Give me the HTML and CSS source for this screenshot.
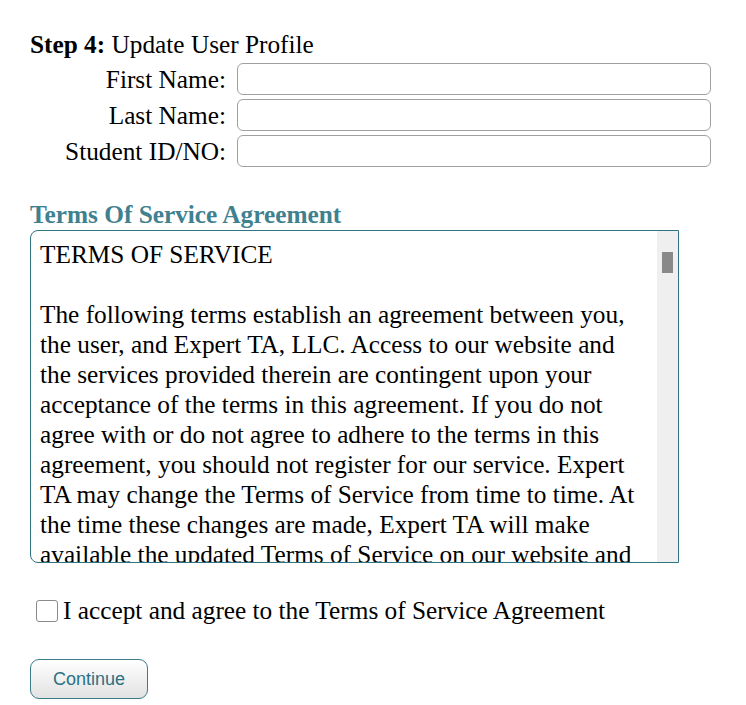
FILE: index.html
```html
<!DOCTYPE html>
<html>
<head>
<meta charset="utf-8">
<link rel="stylesheet" href="styles.css">
</head>
<body>
<div class="page">
  <div class="step"><b>Step 4:</b> Update User Profile</div>
  <div class="fields">
    <label class="lbl">First Name:</label><input class="inp" type="text">
    <label class="lbl">Last Name:</label><input class="inp" type="text">
    <label class="lbl">Student ID/NO:</label><input class="inp" type="text">
  </div>
  <h2 class="tos-title">Terms Of Service Agreement</h2>
  <div class="tos-box">
    <div class="tos-text">TERMS OF SERVICE<br><br>The following terms establish an agreement between you, the user, and Expert TA, LLC. Access to our website and the services provided therein are contingent upon your acceptance of the terms in this agreement. If you do not agree with or do not agree to adhere to the terms in this agreement, you should not register for our service. Expert TA may change the Terms of Service from time to time. At the time these changes are made, Expert TA will make available the updated Terms of Service on our website and notify you of the changes.</div>
    <div class="scrollbar"><div class="thumb"></div></div>
  </div>
  <label class="accept"><span class="box"></span>I accept and agree to the Terms of Service Agreement</label>
  <button class="btn">Continue</button>
</div>
</body>
</html>
```
FILE: styles.css
```css
html, body { margin: 0; padding: 0; background: #fff; }
body { font-family: "Liberation Serif", "Times New Roman", serif; font-size: 25.3px; color: #000; }
.page { padding: 30px 0 0 30px; }
.step { line-height: 28px; }
.fields {
  display: grid;
  grid-template-columns: 196px 474px;
  column-gap: 11px;
  row-gap: 4px;
  margin-top: 5px;
  align-items: center;
}
.lbl { text-align: right; line-height: 28px; }
.inp {
  box-sizing: border-box;
  height: 32px;
  border: 1px solid #a0a0a0;
  border-radius: 6px;
  background: #fff;
  margin: 0;
}
.tos-title {
  margin: 33px 0 0 0;
  font-size: 25.3px;
  line-height: 28px;
  font-weight: bold;
  color: #3f818f;
}
.tos-box {
  box-sizing: border-box;
  width: 649px;
  height: 333px;
  margin-top: 2px;
  border: 1px solid #2e7482;
  border-radius: 8px 0 0 8px;
  display: flex;
  overflow: hidden;
}
.tos-text {
  flex: 1;
  padding: 8px 10px 0 9px;
  line-height: 30px;
  overflow: hidden;
}
.scrollbar {
  width: 21px;
  background: #efefef;
  flex-shrink: 0;
  padding-top: 21px;
}
.thumb {
  width: 11px;
  height: 21px;
  margin-left: 5px;
  background: #898989;
}
.accept {
  display: flex;
  align-items: center;
  margin-top: 33px;
  margin-left: 6px;
  line-height: 28px;
}
.box {
  box-sizing: border-box;
  width: 22px;
  height: 22px;
  border: 1px solid #8a8a8a;
  border-radius: 3px;
  margin-right: 5px;
  margin-top: 2px;
}
.btn {
  display: block;
  margin-top: 35px;
  width: 118px;
  height: 40px;
  box-sizing: border-box;
  border: 1px solid #3b7c8a;
  border-radius: 9px;
  background: linear-gradient(#ffffff, #e2e2e2);
  color: #2c7183;
  font-family: "Liberation Sans", Arial, sans-serif;
  font-size: 18px;
  padding: 0;
}
```
